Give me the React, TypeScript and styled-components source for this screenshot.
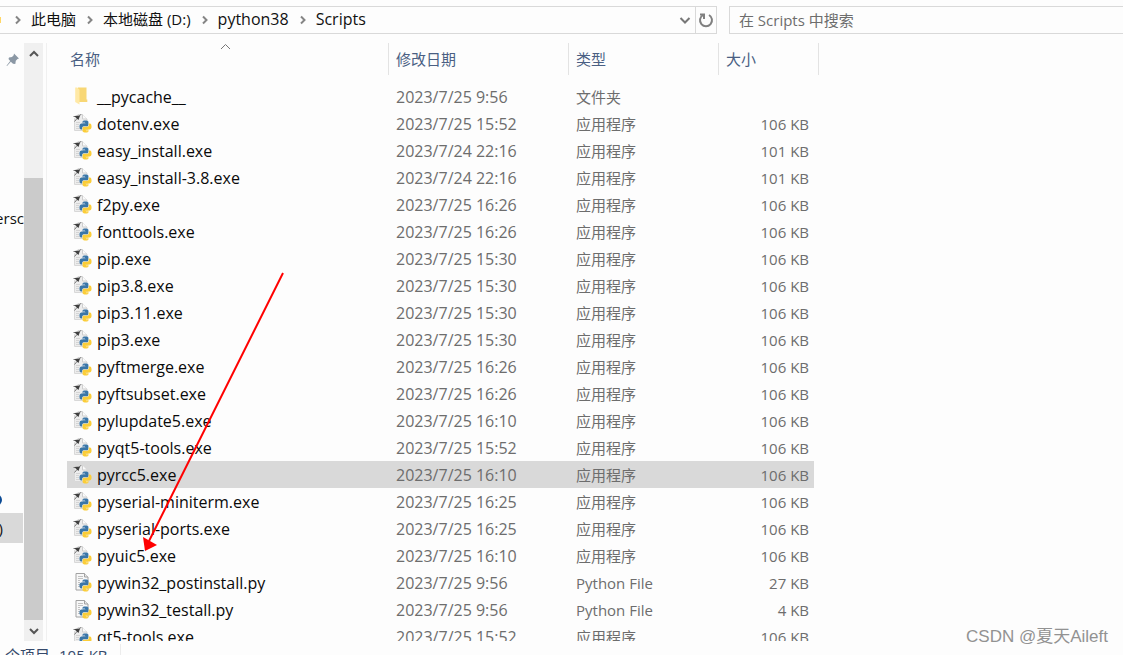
import React from "react";
import styled, { createGlobalStyle } from "styled-components";

const GlobalStyle = createGlobalStyle`
  *, *::before, *::after { box-sizing: border-box; }
  html, body { margin: 0; padding: 0; background: #fdfdfd; }
  body, button, input {
    font-family: "Open Sans", "Noto Sans CJK SC", sans-serif;
    font-size: 15px;
  }
`;

const latinText = `
  font-size: 16px;
`;

const Window = styled.div`
  position: relative;
  display: flex;
  flex-direction: column;
  height: 100vh;
  overflow: hidden;
  color: #6d6d6d;
`;

const TopBar = styled.header`
  display: flex;
  flex: none;
  gap: 12px;
  padding: 6px 0 9px;
`;

const AddressBar = styled.nav`
  display: flex;
  align-items: stretch;
  flex: 1;
  min-width: 0;
  height: 28px;
  border: 1px solid #d9d9d9;
  border-left: 0;
`;

const Crumbs = styled.ol`
  display: flex;
  align-items: center;
  flex: 1;
  margin: 0;
  padding: 0;
  list-style: none;
  overflow: hidden;
`;

const FolderEdge = styled.li`
  width: 1px;
  height: 6px;
  margin-right: 12px;
  background: #ffd766;
`;

const Crumb = styled.li`
  display: flex;
  align-items: center;
  gap: 8px;
  margin-right: 9px;
`;

const CrumbButton = styled.button<{ $latin: boolean }>`
  padding: 0 0 2px;
  border: 0;
  background: none;
  color: #111;
  line-height: 20px;
  white-space: nowrap;
  ${(p) => (p.$latin ? latinText : "")}
`;

const BarButton = styled.button<{ $divided?: boolean }>`
  display: flex;
  align-items: center;
  justify-content: center;
  width: ${(p) => (p.$divided ? 21 : 20)}px;
  padding: 0;
  border: 0;
  border-left: ${(p) => (p.$divided ? "1px solid #d9d9d9" : "0")};
  background: none;
`;

const SearchBox = styled.input`
  flex: none;
  width: calc(35% + 1px);
  height: 28px;
  padding: 0 9px;
  border: 1px solid #d9d9d9;
  border-right: 0;
  border-radius: 0;
  background: transparent;
  outline: 0;
  &::placeholder { color: #6d6d6d; opacity: 1; }
`;

const Body = styled.div`
  display: flex;
  flex: 1;
  min-height: 0;
`;

const Sidebar = styled.aside`
  display: flex;
  flex-direction: column;
  flex: none;
  width: 24px;
  overflow: hidden;
  color: #111;
`;

const PinSlot = styled.div`
  flex: none;
  height: 160px;
  padding: 8px 0 0 6px;
`;

const SideItem = styled.div<{ $active?: boolean }>`
  display: flex;
  flex: none;
  align-items: center;
  justify-content: flex-end;
  width: ${(p) => (p.$active ? 23 : 24)}px;
  height: 30px;
  background: ${(p) => (p.$active ? "#d9d9d9" : "transparent")};
`;

const SideSpacer = styled.div`
  flex: none;
  height: 258px;
`;

const SideGlyphRow = styled.div`
  flex: none;
  height: 22px;
`;

const ClippedLabel = styled.span`
  display: flex;
  justify-content: flex-end;
  width: 3px;
  margin-right: auto;
  overflow: hidden;
`;

const ScrollBar = styled.div`
  display: flex;
  flex: none;
  flex-direction: column;
  width: 19px;
  background: #f0f0f0;
`;

const ScrollButton = styled.button`
  display: flex;
  align-items: center;
  justify-content: center;
  height: 21px;
  padding: 0;
  border: 0;
  background: none;
`;

const ScrollTrack = styled.div`
  display: flex;
  flex: 1;
  flex-direction: column;
  padding-top: 114px;
`;

const ScrollThumb = styled.div`
  flex: 1;
  background: #cbcbcb;
`;

const FilePane = styled.main`
  flex: 1;
  min-width: 0;
  margin-left: 3px;
  padding-left: 15px;
  border-left: 1px solid #f0f0f0;
  overflow: hidden;
`;

const FileTable = styled.table`
  table-layout: fixed;
  width: 757px;
  border-collapse: separate;
  border-spacing: 0;
`;

const HeadCell = styled.th<{ $first?: boolean }>`
  position: relative;
  height: 32px;
  padding: 0 0 0 ${(p) => (p.$first ? 8 : 7)}px;
  border-right: 1px solid #e3e3e3;
  color: #4a5f83;
  font-weight: 400;
  line-height: 22px;
  text-align: left;
`;

const SortMark = styled.svg`
  position: absolute;
  top: 0;
  left: 50%;
  margin-left: -5px;
`;

const HeadGap = styled.td`
  height: 8px;
  padding: 0;
`;

const Row = styled.tr<{ $selected?: boolean }>`
  td + td { background: ${(p) => (p.$selected ? "#d9d9d9" : "transparent")}; }
`;

const Cell = styled.td<{ $right?: boolean; $latin?: boolean }>`
  height: 27px;
  padding: 0 5px 0 7px;
  line-height: 22px;
  text-align: ${(p) => (p.$right ? "right" : "left")};
  white-space: nowrap;
  ${(p) => (p.$latin ? latinText : "")}
`;

const EdgeCell = styled.td`
  padding: 0;
`;

const FileName = styled.div`
  display: flex;
  align-items: center;
  gap: 5px;
  margin-left: -2px;
  color: #0a0a0a;
  svg { flex: none; margin-bottom: 2px; }
`;

const StatusBar = styled.footer`
  display: flex;
  flex: none;
  align-items: flex-start;
  gap: 9px;
  height: 14px;
  padding: 3px 0 0 5px;
  overflow: hidden;
  color: #35496b;
  line-height: 22px;
`;

const StatusDivider = styled.span`
  width: 1px;
  height: 20px;
  margin-left: 3px;
  background: #ececec;
`;

const Annotation = styled.svg`
  position: absolute;
  top: 270px;
  left: 140px;
  pointer-events: none;
`;

const Watermark = styled.div`
  position: absolute;
  right: 15px;
  bottom: 6px;
  color: #929292;
  font-family: "Liberation Sans", "Noto Sans CJK SC", sans-serif;
  font-size: 17px;
  line-height: 24px;
`;

type Kind = "folder" | "exe" | "py";
type Entry = { name: string; date: string; kind: Kind; size: string };

const exe = (name: string, time: string, size = "106 KB"): Entry => ({
  name,
  date: `2023/7/${time}`,
  kind: "exe",
  size,
});

const entries: Entry[] = [
  { name: "__pycache__", date: "2023/7/25 9:56", kind: "folder", size: "" },
  exe("dotenv.exe", "25 15:52"),
  exe("easy_install.exe", "24 22:16", "101 KB"),
  exe("easy_install-3.8.exe", "24 22:16", "101 KB"),
  exe("f2py.exe", "25 16:26"),
  exe("fonttools.exe", "25 16:26"),
  exe("pip.exe", "25 15:30"),
  exe("pip3.8.exe", "25 15:30"),
  exe("pip3.11.exe", "25 15:30"),
  exe("pip3.exe", "25 15:30"),
  exe("pyftmerge.exe", "25 16:26"),
  exe("pyftsubset.exe", "25 16:26"),
  exe("pylupdate5.exe", "25 16:10"),
  exe("pyqt5-tools.exe", "25 15:52"),
  exe("pyrcc5.exe", "25 16:10"),
  exe("pyserial-miniterm.exe", "25 16:25"),
  exe("pyserial-ports.exe", "25 16:25"),
  exe("pyuic5.exe", "25 16:10"),
  { name: "pywin32_postinstall.py", date: "2023/7/25 9:56", kind: "py", size: "27 KB" },
  { name: "pywin32_testall.py", date: "2023/7/25 9:56", kind: "py", size: "4 KB" },
  exe("qt5-tools.exe", "25 15:52"),
];

const kindLabel: Record<Kind, string> = {
  folder: "文件夹",
  exe: "应用程序",
  py: "Python File",
};

const crumbs = [
  { label: "此电脑", latin: false },
  { label: "本地磁盘 (D:)", latin: false },
  { label: "python38", latin: true },
  { label: "Scripts", latin: true },
];

const snake =
  "M14.25.18l.9.2.73.26.59.3.45.32.34.34.25.34.16.33.1.3.04.26.02.2-.01.13V8.5l-.05.63-.13.55-.21.46-.26.38-.3.31-.33.25-.35.19-.35.14-.33.1-.3.07-.26.04-.21.02H8.77l-.69.05-.59.14-.5.22-.41.27-.33.32-.27.35-.2.36-.15.37-.1.35-.07.32-.04.27-.02.21v3.06H3.17l-.21-.03-.28-.07-.32-.12-.35-.18-.36-.26-.36-.36-.35-.46-.32-.59-.28-.73-.21-.88-.14-1.05-.05-1.23.06-1.22.16-1.04.24-.87.32-.71.36-.57.4-.44.42-.33.42-.24.4-.16.36-.1.32-.05.24-.01h.16l.06.01h8.16v-.83H6.18l-.01-2.75-.02-.37.05-.34.11-.31.17-.28.25-.26.31-.23.38-.2.44-.18.51-.15.58-.12.64-.1.71-.06.77-.04.84-.02 1.27.05z";

const PythonMark = () => (
  <g transform="translate(7.500 7.500) scale(.5)">
    <path d={snake} fill="#3a76a8" />
    <path d={snake} fill="#fbcd38" transform="rotate(180 12 12)" />
    <circle cx="9" cy="3.500" r="1.200" fill="#fff" />
    <circle cx="15" cy="20.500" r="1.200" fill="#fff" />
  </g>
);

const FileIcon = ({ kind }: { kind: Kind }) => (
  <svg width="20" height="20" viewBox="0 0 20 20" aria-hidden="true">
    {kind === "folder" && (
      <>
        <path d="M6 1.500h8.500v12h.8v2.500H6z" fill="#f8d775" />
        <path d="M3.200 1.500h2l2.300 2.300v14.700L3.200 16z" fill="#ffe9a6" />
      </>
    )}
    {kind === "exe" && (
      <>
        <path d="M2.500 17.500v-12L6 1.500h4.500l4.500 4.500v11.500z" fill="#ededed" stroke="#d8d8d8" />
        <path d="M10.500 1.500v4.500H15" fill="#fafafa" stroke="#cfcfcf" />
        <path d="M4 9.500h4M4 11.500h3M4 13.500h3M4 15.500h4" stroke="#d4d4d4" />
        <path d="M2.500 8.500l2.500-3M6.500 4L9 1.200M1.500 3.500h3" stroke="#777" />
        <path d="M2.500 3l5.500-.5-1.500 4.500-1.800-1.500z" fill="#3f3f3f" />
        <PythonMark />
      </>
    )}
    {kind === "py" && (
      <>
        <path d="M4 1.500h8.500l3.500 3.500v13H4z" fill="#f8f8f8" stroke="#a2a2a2" />
        <path d="M12.500 1.500V5H16" fill="#e8e8e8" stroke="#a2a2a2" />
        <path d="M6 4.500h5M6 6.500h5M6 8.500h2M6 10.500h2M6 12.500h2M6 14.500h3" stroke="#c2c2c2" />
        <PythonMark />
      </>
    )}
  </svg>
);

type ChevronProps = { d: string; width: number; height: number; color?: string };

const Chevron = ({ d, width, height, color = "#555" }: ChevronProps) => (
  <svg width={width} height={height} viewBox={`0 0 ${width} ${height}`} fill="none" stroke={color} strokeWidth="2" aria-hidden="true">
    <path d={d} />
  </svg>
);

export default function App() {
  return (
    <Window>
      <GlobalStyle />
      <TopBar>
        <AddressBar aria-label="地址">
          <Crumbs>
            <FolderEdge />
            {crumbs.map(({ label, latin }) => (
              <Crumb key={label}>
                <Chevron d="M3 1.500l3.500 3.500L3 8.500" width={10} height={10} color="#858585" />
                <CrumbButton type="button" $latin={latin}>{label}</CrumbButton>
              </Crumb>
            ))}
          </Crumbs>
          <BarButton type="button" aria-label="历史记录">
            <Chevron d="M1.500 3l4.500 4.500L10.500 3" width={12} height={10} color="#777" />
          </BarButton>
          <BarButton type="button" aria-label="刷新" $divided>
            <svg width="16" height="16" viewBox="0 0 16 16" fill="none" stroke="#808080" strokeWidth="2">
              <path d="M11 3a6 6 0 1 1-6 0" />
              <path d="M2 2.500h4V7" />
            </svg>
          </BarButton>
        </AddressBar>
        <SearchBox type="search" aria-label="搜索" placeholder="在 Scripts 中搜索" />
      </TopBar>
      <Body>
        <Sidebar>
          <PinSlot>
            <svg width="14" height="14" viewBox="0 0 14 14" fill="#8b98a5" aria-hidden="true">
              <path d="M8 .5L13 5.500l-1.500.5-1.700 1.800-.5 3.200-2.300-.3-2.200-2L1 13l-.5-.2L4.200 8 2.500 6 3 4.500 6 4l1.700-1.700z" />
            </svg>
          </PinSlot>
          <SideItem>ersc</SideItem>
          <SideSpacer />
          <SideGlyphRow>
            <svg width="4" height="14" viewBox="0 0 4 14" aria-hidden="true">
              <circle cx="-4" cy="7" r="5" fill="#20a4e8" stroke="#0b4a94" strokeWidth="2" />
            </svg>
          </SideGlyphRow>
          <SideItem $active>
            <ClippedLabel>(D:)</ClippedLabel>
          </SideItem>
        </Sidebar>
        <ScrollBar>
          <ScrollButton type="button" aria-label="向上滚动">
            <Chevron d="M1 7l4-4 4 4" width={10} height={10} />
          </ScrollButton>
          <ScrollTrack>
            <ScrollThumb />
          </ScrollTrack>
          <ScrollButton type="button" aria-label="向下滚动">
            <Chevron d="M1 3l4 4 4-4" width={10} height={10} />
          </ScrollButton>
        </ScrollBar>
        <FilePane>
          <FileTable>
            <colgroup>
              <col width="5" />
              <col width="322" />
              <col width="180" />
              <col width="150" />
              <col width="95" />
              <col width="5" />
            </colgroup>
            <thead>
              <tr>
                <HeadCell $first colSpan={2}>
                  <SortMark width="11" height="7" viewBox="0 0 11 7" fill="none" stroke="#777">
                    <path d="M1 6l4.500-4.500L10 6" />
                  </SortMark>
                  名称
                </HeadCell>
                <HeadCell>修改日期</HeadCell>
                <HeadCell>类型</HeadCell>
                <HeadCell colSpan={2}>大小</HeadCell>
              </tr>
            </thead>
            <tbody>
              <tr>
                <HeadGap colSpan={6} />
              </tr>
              {entries.map((e) => (
                <Row key={e.name} $selected={e.name === "pyrcc5.exe"}>
                  <EdgeCell />
                  <Cell $latin>
                    <FileName>
                      <FileIcon kind={e.kind} />
                      {e.name}
                    </FileName>
                  </Cell>
                  <Cell $latin>{e.date}</Cell>
                  <Cell>{kindLabel[e.kind]}</Cell>
                  <Cell $right>{e.size}</Cell>
                </Row>
              ))}
            </tbody>
          </FileTable>
        </FilePane>
      </Body>
      <StatusBar>
        <span>个项目</span>
        <span>105 KB</span>
        <StatusDivider />
      </StatusBar>
      <Annotation width="146" height="284" viewBox="0 0 146 284" aria-hidden="true">
        <path d="M143 3L9 271" stroke="#f00" strokeWidth="2" />
        <path d="M3 267l14 8-12 6z" fill="#f00" />
      </Annotation>
      <Watermark>CSDN @夏天Aileft</Watermark>
    </Window>
  );
}
